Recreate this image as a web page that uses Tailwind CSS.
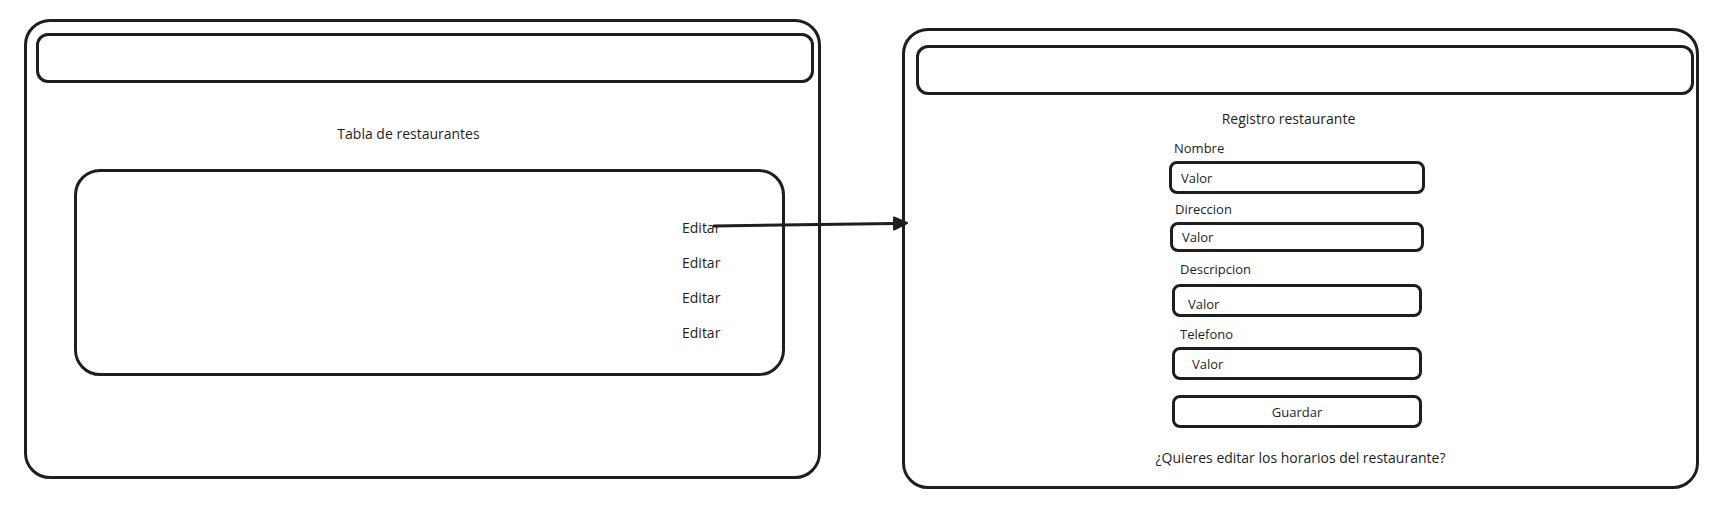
<!DOCTYPE html>
<html lang="es">
<head>
<meta charset="utf-8">
<meta name="viewport" content="width=device-width, initial-scale=1">
<title>Restaurantes</title>
<script src="https://cdn.jsdelivr.net/npm/@tailwindcss/browser@4"></script>
</head>
<body class="bg-white text-[#1e1e1e] font-['Excalifont','Open_Sans',sans-serif] text-[14px] leading-5">
<main class="relative flex items-start gap-[81px] pt-[19px] pl-6 pr-[19px]">

  <section class="relative min-w-0 flex-1 rounded-[26px] border-3 border-[#1e1e1e] pt-[11px] pb-[100px]">
    <header class="ml-[9px] mr-1 h-[50px] rounded-xl border-3 border-[#1e1e1e]"></header>
    <h1 class="mt-[41px] pr-7 text-center">Tabla de restaurantes</h1>
    <div class="mt-[25px] ml-[47px] mr-[33px] rounded-[26px] border-3 border-[#1e1e1e] pt-[46px] pb-[30px]">
      <ul class="ml-auto flex w-[100px] flex-col gap-[15px]">
        <li><a href="#registro">Editar</a></li>
        <li><a href="#registro">Editar</a></li>
        <li><a href="#registro">Editar</a></li>
        <li><a href="#registro">Editar</a></li>
      </ul>
    </div>
    <!-- Flow arrow from the first "Editar" to the form screen -->
    <svg class="absolute top-[190px] left-full -ml-[108px]" width="200" height="24" viewBox="0 0 200 24" fill="none" stroke="#1e1e1e" stroke-linecap="round" stroke-linejoin="round" aria-hidden="true">
      <path d="M4 14 L185 11.500" stroke-width="3"/>
      <path d="M184 5.500 L197 11 L184 17.500 Z" fill="#1e1e1e" stroke-width="2"/>
    </svg>
  </section>

  <section id="registro" class="mt-[9px] min-w-0 flex-1 rounded-[26px] border-3 border-[#1e1e1e] pt-[14px] pb-[18px]">
    <header class="ml-[11px] mr-0.5 h-[50px] rounded-xl border-3 border-[#1e1e1e]"></header>
    <h2 class="mt-[14px] pr-6 text-center">Registro restaurante</h2>
    <div class="mt-[9px] pr-[7px]">
      <form class="mx-auto flex w-64 flex-col text-[13px]">
        <div class="flex flex-col gap-[3px]">
          <label for="nombre" class="pl-[5px]">Nombre</label>
          <input id="nombre" type="text" value="Valor" class="h-[33px] w-full rounded-lg border-3 border-[#1e1e1e] px-[9px]">
        </div>
        <div class="mt-[5px] flex flex-col gap-[3px] px-px">
          <label for="direccion" class="pl-[5px]">Direccion</label>
          <input id="direccion" type="text" value="Valor" class="h-[30px] w-full rounded-lg border-3 border-[#1e1e1e] px-[9px]">
        </div>
        <div class="mt-[7px] flex flex-col gap-[5px] px-[3px]">
          <label for="descripcion" class="pl-2">Descripcion</label>
          <input id="descripcion" type="text" value="Valor" class="h-[33px] w-full rounded-lg border-3 border-[#1e1e1e] px-[13px] pt-1.5">
        </div>
        <div class="mt-[7px] flex flex-col gap-[3px] px-[3px]">
          <label for="telefono" class="pl-2">Telefono</label>
          <input id="telefono" type="text" value="Valor" class="h-[33px] w-full rounded-lg border-3 border-[#1e1e1e] px-[17px]">
        </div>
        <div class="mt-[15px] px-[3px]">
          <button type="submit" class="block h-[33px] w-full rounded-lg border-3 border-[#1e1e1e]">Guardar</button>
        </div>
      </form>
    </div>
    <p class="mt-5 text-center"><a href="#horarios">¿Quieres editar los horarios del restaurante?</a></p>
  </section>

</main>
</body>
</html>
